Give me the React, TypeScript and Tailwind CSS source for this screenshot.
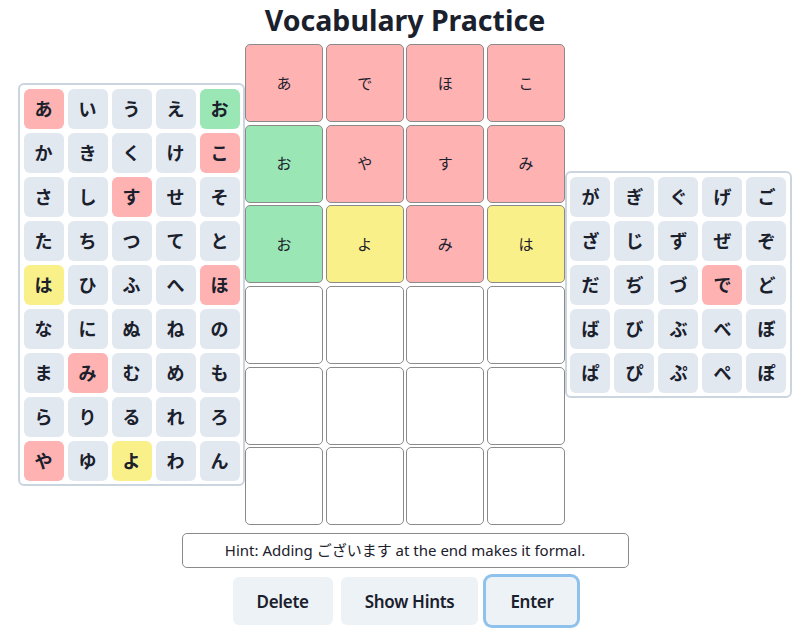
import React from "react"

type Tone = "red" | "green" | "yellow" | "none"

const tones: Record<Tone, string> = {
  red: "bg-[#feb2b2]",
  green: "bg-[#9ae6b4]",
  yellow: "bg-[#faf089]",
  none: "bg-[#e2e8f0]",
}

const cellTones: Record<Tone, string> = {
  red: "bg-[#feb2b2]",
  green: "bg-[#9ae6b4]",
  yellow: "bg-[#faf089]",
  none: "bg-white",
}

const leftKeys = [
  "あいうえお",
  "かきくけこ",
  "さしすせそ",
  "たちつてと",
  "はひふへほ",
  "なにぬねの",
  "まみむめも",
  "らりるれろ",
  "やゆよわん",
]

const rightKeys = ["がぎぐげご", "ざじずぜぞ", "だぢづでど", "ばびぶべぼ", "ぱぴぷぺぽ"]

const keyTones: Record<string, Tone> = {
  あ: "red",
  お: "green",
  こ: "red",
  す: "red",
  は: "yellow",
  ほ: "red",
  み: "red",
  や: "red",
  よ: "yellow",
  で: "red",
}

const guesses: [string, Tone][][] = [
  [["あ", "red"], ["で", "red"], ["ほ", "red"], ["こ", "red"]],
  [["お", "green"], ["や", "red"], ["す", "red"], ["み", "red"]],
  [["お", "green"], ["よ", "yellow"], ["み", "red"], ["は", "yellow"]],
]

const font = {
  fontFamily: '"Noto Sans", "Noto Sans CJK JP", sans-serif',
}

function Keyboard({ rows }: { rows: string[] }) {
  return (
    <div className="grid grid-cols-5 gap-1 rounded-md border-2 border-[#cbd5e0] bg-white p-[3.5px]">
      {rows.flatMap((row) =>
        Array.from(row).map((k) => (
          <button
            key={k}
            className={`flex h-10 w-10 items-center justify-center rounded-md text-lg font-bold text-[#1a202c] ${
              tones[keyTones[k] ?? "none"]
            }`}
          >
            {k}
          </button>
        )),
      )}
    </div>
  )
}

function Board() {
  const rows = Array.from(
    { length: 6 },
    (_, i) => guesses[i] ?? Array.from({ length: 4 }, () => ["", "none"] as [string, Tone]),
  )
  return (
    <div className="grid grid-cols-4 gap-[2.67px]">
      {rows.flatMap((row, r) =>
        row.map(([ch, tone], c) => (
          <div
            key={`${r}-${c}`}
            className={`flex h-[78px] w-[78px] items-center justify-center rounded-[5px] border border-[#8a8a8a] text-[15px] text-[#1a202c] ${cellTones[tone]}`}
          >
            {ch}
          </div>
        )),
      )}
    </div>
  )
}

export default function App() {
  return (
    <div className="flex min-h-screen flex-col items-center bg-white text-[#1a202c]" style={font}>
      <h1 className="h-11 text-[28.5px] leading-10 font-bold">Vocabulary Practice</h1>

      <div className="flex items-center">
        <Keyboard rows={leftKeys} />
        <Board />
        <Keyboard rows={rightKeys} />
      </div>

      <div className="mt-2 w-[447px] rounded-[5px] border border-[#8a8a8a] py-[6px] text-center text-[15px] leading-[21px]">
        Hint: Adding ございます at the end makes it formal.
      </div>

      <div className="mt-[9px] flex gap-2">
        <button className="h-12 rounded-md bg-[#edf2f7] px-6 text-[17px] font-semibold tracking-[-0.3px]">
          Delete
        </button>
        <button className="h-12 rounded-md bg-[#edf2f7] px-6 text-[17px] font-semibold tracking-[-0.3px]">
          Show Hints
        </button>
        <button className="h-12 rounded-md bg-[#edf2f7] px-6 text-[17px] font-semibold tracking-[-0.3px] ring-3 ring-[rgba(66,153,225,0.6)]">
          Enter
        </button>
      </div>
    </div>
  )
}
